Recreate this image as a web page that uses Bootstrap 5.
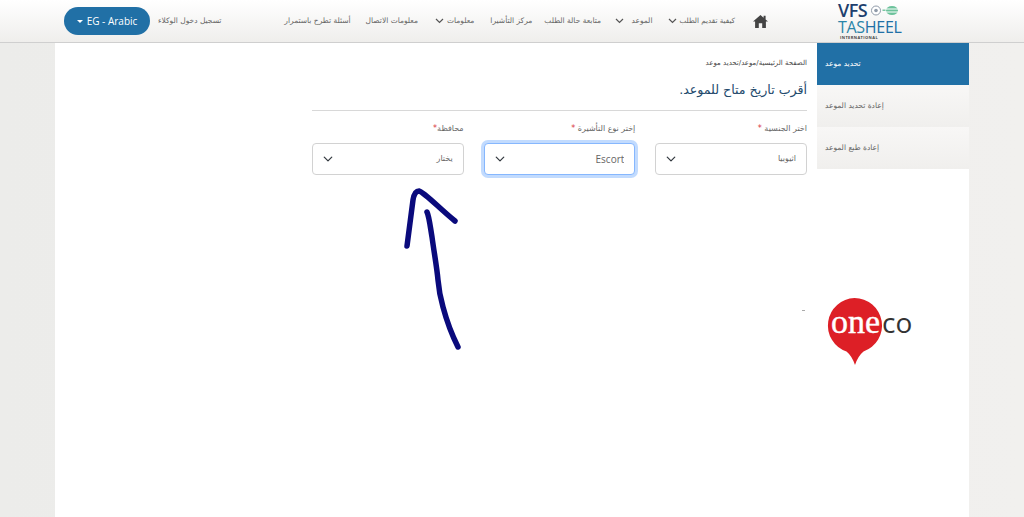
<!DOCTYPE html>
<html lang="ar" dir="rtl">

<head>
  <meta charset="UTF-8" />
  <meta name="viewport" content="width=device-width, initial-scale=1.0" />
  <title>VFS Tasheel</title>
  <link href="https://cdn.jsdelivr.net/npm/bootstrap@5.3.2/dist/css/bootstrap.min.css" rel="stylesheet" />
  <style>
    html, body {
      height: 517px;
      overflow: hidden;
    }

    body {
      background: linear-gradient(90deg, #ececea, #f1f0ee);
      font-family: "DejaVu Sans", sans-serif;
      position: relative;
    }

    .top-bar {
      height: 43px;
      background: linear-gradient(#ffffff, #efeeec);
      border-bottom: 1px solid #cfcfcf;
      padding-right: 120px;
      padding-left: 64px;
    }

    .brand {
      width: 66px;
      height: 40px;
      margin-top: 1px;
      margin-left: 70px;
      direction: ltr;
      font-family: "Open Sans", sans-serif;
    }

    .brand-vfs {
      font-size: 18px;
      font-weight: 600;
      color: #1d3f6e;
      letter-spacing: -0.5px;
      height: 17px;
      line-height: 17px;
    }

    .brand-tas {
      font-size: 16px;
      font-weight: 500;
      color: #2a85a8;
      letter-spacing: -0.3px;
      height: 16px;
      line-height: 16px;
    }

    .brand-tas span {
      color: #2170a6;
    }

    .brand-int {
      font-size: 4px;
      line-height: 5px;
      font-weight: 700;
      color: #444;
      letter-spacing: 0.4px;
      margin-left: 2px;
    }

    .menu-items > *:nth-child(1) { font-size: 7.2px; }
    .menu-items > *:nth-child(2) { margin-right: 2px; }
    .menu-items > *:nth-child(3) { margin-right: 16px; }
    .menu-items > *:nth-child(4) { margin-right: 7px; }
    .menu-items > *:nth-child(5) { margin-right: 14.5px; }
    .menu-items > *:nth-child(6) { margin-right: 12px; }
    .menu-items > *:nth-child(7) { margin-right: 16px; }
    .menu-items > *:nth-child(8) { margin-right: 3.5px; }
    .menu-items > *:nth-child(9) { margin-right: 16.5px; }
    .menu-items > *:nth-child(10) { margin-right: 15px; }

    .menu-items {
      margin-right: 18px;
    }

    .menu-link {
      font-size: 7.5px;
      color: #666;
      white-space: nowrap;
    }

    .menu-chev {
      width: 9px;
      height: 6px;
    }

    .lang-btn {
      width: 86px;
      height: 28px;
      border-radius: 14px;
      background: #2170a6;
      color: #fff;
      font-family: "Open Sans", sans-serif;
      font-size: 10px;
      padding: 0;
      direction: ltr;
      display: inline-flex;
      align-items: center;
      justify-content: center;
    }

    .lang-btn::after {
      order: -1;
      margin: 0 4px 0 0;
    }

    .page-body {
      width: 914px;
      height: 474px;
      margin-right: 55px;
      background: #fff;
    }

    .side-nav {
      width: 152px;
    }

    .side-link {
      height: 42px;
      font-size: 7.5px;
      color: #666;
      padding-left: 8px;
      background: linear-gradient(#f8f7f6, #f0efed);
    }

    .side-link.current {
      background: #2170a6;
      color: #fff;
    }

    .form-area {
      width: 495px;
      margin-right: 10px;
    }

    .crumbs {
      font-size: 7px;
      color: #444;
      margin-top: 15px;
      height: 10px;
      line-height: 10px;
    }

    .page-title {
      font-size: 12.6px;
      color: #234a6c;
      margin: 10px 0 0;
      height: 24px;
      line-height: 24px;
      font-weight: 400;
    }

    .title-rule {
      margin: 8px 0 0;
      border-top: 1px solid #d8d8d8;
      opacity: 1;
    }

    .field-row {
      gap: 20px;
      margin-top: 12px;
    }

    .field-box {
      width: 152px;
    }

    .field-label {
      font-size: 8px;
      color: #666;
      height: 20px;
      line-height: 12px;
      margin: 0;
      display: block;
    }

    .field-label span {
      color: #d9363e;
    }

    .field-select {
      height: 32px;
      font-size: 8px;
      color: #666;
      padding: 0 10px 0 30px;
      border-color: #d2d2d2;
      background-position: left 8px center;
      background-size: 14px 10px;
      border-radius: 4px;
    }

    .field-select.latin {
      font-family: "Open Sans", sans-serif;
      font-size: 10px;
    }

    .field-select.active-field {
      border-color: #86b7fe;
      box-shadow: 0 0 0 3px rgba(13, 110, 253, .25);
    }

    .pen-arrow {
      position: absolute;
      left: 395px;
      top: 180px;
      width: 75px;
      height: 175px;
    }

    .oneco {
      position: absolute;
      left: 800px;
      top: 295px;
      width: 115px;
      height: 72px;
      direction: ltr;
    }
  </style>
</head>

<body>

  <!-- Header -->
  <nav class="top-bar d-flex align-items-center">
    <div class="brand flex-shrink-0">
      <div class="brand-vfs d-flex align-items-center gap-1">VFS
        <svg width="29" height="11" viewBox="0 0 29 11">
          <circle cx="5" cy="5.500" r="4.500" fill="#fff" stroke="#8f9aa8" stroke-width="1" />
          <circle cx="5" cy="5.500" r="1.800" fill="#8f9aa8" />
          <rect x="11.500" y="4.600" width="3" height="1.200" fill="#5bb98c" />
          <ellipse cx="21" cy="5.500" rx="6" ry="4.500" fill="#6cc29b" />
          <path d="M15 4h12M15 7h12" stroke="#fff" stroke-width="1" />
        </svg>
      </div>
      <div class="brand-tas">TAS<span>HEEL</span></div>
      <div class="brand-int">INTERNATIONAL</div>
    </div>
    <a class="d-flex" href="#" aria-label="home">
      <svg width="15" height="14" viewBox="0 0 15 14">
        <path d="M7.500 1 0 7.600h2.100V14h3.700V9.300h3.400V14h3.700V7.600H15L12.600 5.500V1.700h-2v2z" fill="#444" />
      </svg>
    </a>
    <div class="menu-items d-flex align-items-center flex-grow-1">
      <a class="menu-link text-decoration-none" href="#">كيفية تقديم الطلب</a>
      <svg class="menu-chev" viewBox="0 0 9 6"><path d="M1 1l3.500 3.500L8 1" fill="none" stroke="#555" stroke-width="1.200" /></svg>
      <a class="menu-link text-decoration-none" href="#">الموعد</a>
      <svg class="menu-chev" viewBox="0 0 9 6"><path d="M1 1l3.500 3.500L8 1" fill="none" stroke="#555" stroke-width="1.200" /></svg>
      <a class="menu-link text-decoration-none" href="#">متابعة حالة الطلب</a>
      <a class="menu-link text-decoration-none" href="#">مركز التأشيرا</a>
      <a class="menu-link text-decoration-none" href="#">معلومات</a>
      <svg class="menu-chev" viewBox="0 0 9 6"><path d="M1 1l3.500 3.500L8 1" fill="none" stroke="#555" stroke-width="1.200" /></svg>
      <a class="menu-link text-decoration-none" href="#">معلومات الاتصال</a>
      <a class="menu-link text-decoration-none" href="#">أسئلة تطرح باستمرار</a>
    </div>
    <a class="menu-link text-decoration-none ms-2" href="#">تسجيل دخول الوكلاء</a>
    <button class="btn lang-btn dropdown-toggle flex-shrink-0" type="button">EG - Arabic</button>
  </nav>

  <!-- Page body -->
  <div class="page-body d-flex">
    <div class="side-nav flex-shrink-0">
      <div class="side-link current d-flex align-items-center justify-content-end">تحديد موعد</div>
      <div class="side-link d-flex align-items-center justify-content-end">إعادة تحديد الموعد</div>
      <div class="side-link d-flex align-items-center justify-content-end">إعادة طبع الموعد</div>
    </div>
    <div class="form-area">
      <div class="crumbs">الصفحة الرئيسية/موعد/تحديد موعد</div>
      <h1 class="page-title">أقرب تاريخ متاح للموعد.</h1>
      <hr class="title-rule" />
      <div class="field-row d-flex">
        <div class="field-box">
          <label class="field-label">اختر الجنسية <span>*</span></label>
          <select class="form-select field-select"><option>اثيوبيا</option></select>
        </div>
        <div class="field-box">
          <label class="field-label">إختر نوع التأشيرة <span>*</span></label>
          <select class="form-select field-select latin active-field"><option>Escort</option></select>
        </div>
        <div class="field-box">
          <label class="field-label">محافظة<span>*</span></label>
          <select class="form-select field-select"><option>يختار</option></select>
        </div>
      </div>
    </div>
  </div>

  <!-- Hand-drawn arrow -->
  <svg class="pen-arrow" viewBox="395 180 75 175">
    <path d="M407 246 410 223 413 200C414 194 416 191 419 191C424 192 440 209 455 221" fill="none" stroke="#0a0a7c" stroke-width="5.500" stroke-linecap="round" stroke-linejoin="round" />
    <path d="M427 212C429 216 430 225 432 237C434 252 437 268 438 280C439 292 441 300 443 307C447 322 452 335 458 347" fill="none" stroke="#0a0a7c" stroke-width="5.500" stroke-linecap="round" stroke-linejoin="round" />
  </svg>

  <!-- Watermark -->
  <svg class="oneco" viewBox="800 295 115 72">
    <rect x="802" y="310" width="3" height="1" fill="#aaa" />
    <path d="M854.500 298a27.500 27.500 0 0 1 9 53.500Q858 356 855 365Q852 356 846.500 351.500A27.500 27.500 0 0 1 854.500 298z" fill="#dd1f26" />
    <text x="831" y="333" font-family="Liberation Serif, serif" font-size="34" fill="#fff" stroke="#fff" stroke-width="0.400">one</text>
    <text x="882" y="333" font-family="Open Sans, sans-serif" font-size="28" fill="#333">co</text>
  </svg>

  <script src="https://cdn.jsdelivr.net/npm/bootstrap@5.3.2/dist/js/bootstrap.bundle.min.js"></script>
</body>

</html>
